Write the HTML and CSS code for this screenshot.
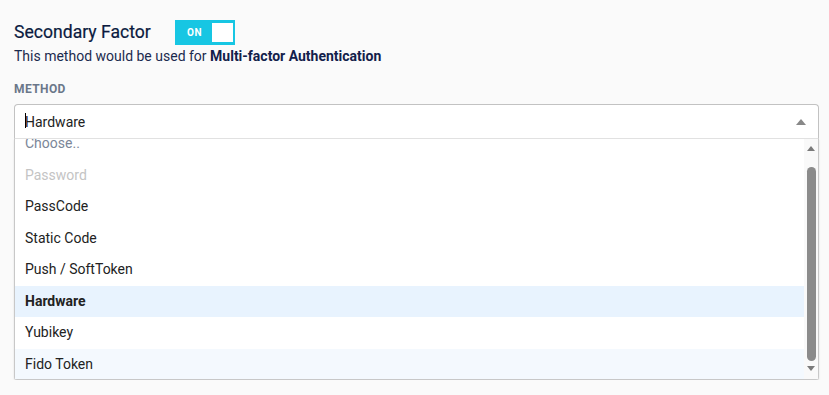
FILE: index.html
```html
<!DOCTYPE html>
<html>
<head>
<meta charset="utf-8">
<link rel="stylesheet" href="styles.css">
</head>
<body>
<div class="page">
  <div class="title-row">
    <h1 class="title">Secondary Factor</h1>
    <div class="toggle"><span class="toggle-label">ON</span><span class="toggle-knob"></span></div>
  </div>
  <p class="desc">This method would be used for <strong>Multi-factor Authentication</strong></p>
  <div class="label">METHOD</div>
  <div class="select">
    <div class="select-input"><span class="caret"></span>Hardware</div>
    <svg class="select-arrow" width="10" height="6" viewBox="0 0 10 6"><path d="M0 6 L5 0 L10 6 Z" fill="#888"/></svg>
  </div>
  <div class="dropdown">
    <div class="options">
      <div class="opt-list">
        <div class="opt placeholder">Choose..</div>
        <div class="opt disabled">Password</div>
        <div class="opt">PassCode</div>
        <div class="opt">Static Code</div>
        <div class="opt">Push / SoftToken</div>
        <div class="opt selected">Hardware</div>
        <div class="opt">Yubikey</div>
        <div class="opt hover">Fido Token</div>
      </div>
    </div>
    <div class="scrollbar">
      <svg class="sb-arrow" width="8" height="5" viewBox="0 0 8 5"><path d="M0 5 L4 0 L8 5 Z" fill="#7a7a7a"/></svg>
      <div class="sb-track"><div class="sb-thumb"></div></div>
      <svg class="sb-arrow" width="8" height="5" viewBox="0 0 8 5"><path d="M0 0 L4 5 L8 0 Z" fill="#7a7a7a"/></svg>
    </div>
  </div>
</div>
</body>
</html>
```

FILE: styles.css
```css
html, body {
  margin: 0;
  padding: 0;
  background: #fafafa;
}
body {
  font-family: Roboto, "Liberation Sans", Arial, sans-serif;
  color: #1b2a4e;
}
.page {
  padding: 19px 10px 0 14px;
}
.title-row {
  display: flex;
  align-items: center;
  height: 26px;
}
.title {
  margin: 0;
  font-size: 17.6px;
  font-weight: 400;
  color: #0b1a40;
  width: 161px;
  line-height: 26px;
  -webkit-text-stroke: 0.2px #0b1a40;
}
.toggle {
  width: 60px;
  height: 25px;
  background: #17c6e3;
  display: flex;
  align-items: center;
  box-sizing: border-box;
  padding: 0 2px 0 12px;
}
.toggle-label {
  color: #fff;
  font-size: 10px;
  font-weight: 700;
  letter-spacing: 0.5px;
  flex: 1;
}
.toggle-knob {
  width: 21px;
  height: 19px;
  background: #fff;
}
.desc {
  margin: 2px 0 0;
  font-size: 14px;
  line-height: 18px;
  color: #1b2a4e;
}
.desc strong {
  font-weight: 700;
  color: #12204a;
}
.label {
  margin-top: 17px;
  font-size: 12px;
  font-weight: 700;
  letter-spacing: 0.4px;
  color: #6a7789;
  line-height: 14px;
}
.select {
  margin-top: 8px;
  height: 35px;
  box-sizing: border-box;
  border: 1px solid #c2c2c2;
  border-bottom: 1px solid #e2e2e2;
  border-radius: 4px 4px 0 0;
  background: #fff;
  display: flex;
  align-items: center;
  padding: 0 12px 0 10px;
}
.select-input {
  flex: 1;
  font-size: 14px;
  color: #222;
  position: relative;
  line-height: 16px;
}
.caret {
  position: absolute;
  left: 0;
  top: -1px;
  width: 1px;
  height: 15px;
  background: #000;
}
.select-arrow {
  display: block;
}
.dropdown {
  height: 241px;
  box-sizing: border-box;
  border: 1px solid #c8c8c8;
  border-top: none;
  border-radius: 0 0 3px 3px;
  background: #fff;
  display: flex;
  box-shadow: 0 1px 2px rgba(0,0,0,0.12);
}
.options {
  flex: 1;
  overflow: hidden;
}
.opt-list {
  margin-top: -11px;
}
.opt {
  height: 31.5px;
  line-height: 31.5px;
  padding-left: 10px;
  font-size: 14px;
  color: #222;
}
.opt.placeholder {
  color: #7b8698;
}
.opt.disabled {
  color: #c4c4c4;
}
.opt.selected {
  background: #e8f3fe;
  font-weight: 700;
  color: #222;
}
.opt.hover {
  background: #f4f9fe;
}
.scrollbar {
  width: 14px;
  background: #f9f9f9;
  display: flex;
  flex-direction: column;
  align-items: center;
  padding: 7px 0 8px;
  box-sizing: border-box;
}
.sb-arrow {
  display: block;
  flex: none;
}
.sb-track {
  flex: 1;
  width: 100%;
  display: flex;
  justify-content: center;
  padding: 16px 0 5px;
  box-sizing: border-box;
}
.sb-thumb {
  width: 9px;
  height: 100%;
  background: #8b8b8b;
  border-radius: 5px;
}
```
